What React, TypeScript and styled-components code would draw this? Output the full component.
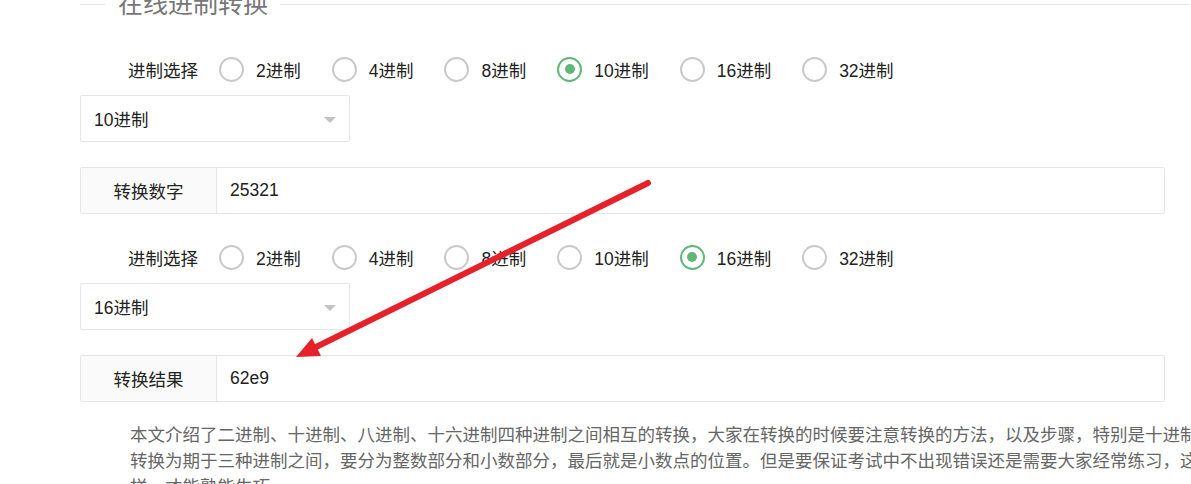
import React from "react";
import styled, { createGlobalStyle } from "styled-components";

const GlobalStyle = createGlobalStyle`
  html, body {
    margin: 0;
    padding: 0;
    background: #fff;
    overflow: hidden;
  }
  body {
    font-family: "Liberation Sans", "Noto Sans CJK SC", sans-serif;
    font-size: 17.5px;
    color: #333;
  }
`;

const bases = ["2", "4", "8", "10", "16", "32"];

// Page frame
const Page = styled.div`
  position: relative;
  width: 1191px;
  height: 484px;
  overflow: hidden;
`;

const Field = styled.section`
  margin-left: 80px;
  width: 1110px;
`;

const FieldHeader = styled.div`
  display: flex;
  align-items: center;
  height: 30px;
  margin-top: -11px;
`;

const Rule = styled.div<{ grow?: boolean }>`
  flex: ${(p) => (p.grow ? "1" : "0 0 25px")};
  height: 1px;
  background: #e6e6e6;
`;

const FieldTitle = styled.h2`
  margin: 0;
  padding: 0 12px 0 13px;
  font-size: 25px;
  font-weight: 400;
  line-height: 30px;
  color: #777;
`;

const FieldBody = styled.div`
  padding-right: 25px;
  margin-top: 31px;
`;

// Form parts
const Block = styled.div<{ gap?: number }>`
  margin-top: ${(p) => p.gap || 0}px;
`;

const RadioRow = styled.div`
  display: flex;
  align-items: center;
  height: 38px;
  padding-left: 48px;
`;

const RowLabel = styled.span`
  margin-right: 21px;
  color: #222;
`;

const RadioItem = styled.label`
  display: flex;
  align-items: center;
  margin-right: 31px;
  color: #222;
`;

const RadioMark = styled.span<{ checked?: boolean }>`
  width: 25px;
  height: 25px;
  box-sizing: border-box;
  border-radius: 50%;
  border: 2px solid ${(p) => (p.checked ? "#5FB878" : "#c9c9c9")};
  margin-right: 12px;
  display: flex;
  align-items: center;
  justify-content: center;

  &::after {
    content: "";
    display: ${(p) => (p.checked ? "block" : "none")};
    width: 10px;
    height: 10px;
    border-radius: 50%;
    background: #5FB878;
  }
`;

const SelectBox = styled.div`
  position: relative;
  width: 270px;
  height: 47px;
  box-sizing: border-box;
  margin-top: 7px;
  padding-left: 13px;
  border: 1px solid #e6e6e6;
  border-radius: 2px;
  display: flex;
  align-items: center;
  color: #222;

  &::after {
    content: "";
    position: absolute;
    right: 13px;
    top: 50%;
    margin-top: -2px;
    border-style: solid;
    border-width: 6.5px;
    border-color: #c2c2c2 transparent transparent transparent;
  }
`;

const InputGroup = styled.div`
  display: flex;
  height: 47px;
  box-sizing: border-box;
  margin-top: 25px;
  border: 1px solid #e6e6e6;
  border-radius: 2px;
`;

const Prefix = styled.div`
  width: 135px;
  flex: none;
  background: #fafafa;
  border-right: 1px solid #e6e6e6;
  display: flex;
  align-items: center;
  justify-content: center;
  color: #222;
`;

const ValueInput = styled.input`
  flex: 1;
  border: none;
  outline: none;
  padding: 0 0 0 13px;
  font: inherit;
  color: #222;
  background: transparent;
`;

const Intro = styled.p`
  margin: 20px 0 0 50px;
  width: 1075px;
  font-size: 17.5px;
  line-height: 26px;
  color: #666;
`;

const ArrowLayer = styled.svg`
  position: absolute;
  left: 0;
  top: 0;
  pointer-events: none;
`;

interface BlockProps {
  selected: string;
  label: string;
  value: string;
  gap?: number;
}

const ConvertBlock: React.FC<BlockProps> = ({ selected, label, value, gap }) => (
  <Block gap={gap}>
    <RadioRow>
      <RowLabel>进制选择</RowLabel>
      {bases.map((b) => (
        <RadioItem key={b}>
          <RadioMark checked={b === selected} />
          {b}进制
        </RadioItem>
      ))}
    </RadioRow>
    <SelectBox>{selected}进制</SelectBox>
    <InputGroup>
      <Prefix>{label}</Prefix>
      <ValueInput defaultValue={value} readOnly />
    </InputGroup>
  </Block>
);

const App: React.FC = () => {
  return (
    <Page>
      <GlobalStyle />
      <Field>
        <FieldHeader>
          <Rule />
          <FieldTitle>在线进制转换</FieldTitle>
          <Rule grow />
        </FieldHeader>
        <FieldBody>
          <ConvertBlock selected="10" label="转换数字" value="25321" />
          <ConvertBlock selected="16" label="转换结果" value="62e9" gap={24} />
          <Intro>
            本文介绍了二进制、十进制、八进制、十六进制四种进制之间相互的转换，大家在转换的时候要注意转换的方法，以及步骤，特别是十进制转换为期于三种进制之间，要分为整数部分和小数部分，最后就是小数点的位置。但是要保证考试中不出现错误还是需要大家经常练习，这样，才能熟能生巧。
          </Intro>
        </FieldBody>
      </Field>

      {/* red annotation arrow */}
      <ArrowLayer width={1191} height={484}>
        <line
          x1={648}
          y1={183}
          x2={312}
          y2={349}
          stroke="#e6212a"
          strokeWidth={6}
          strokeLinecap="round"
        />
        <polygon points="296,357 312,338 321,356" fill="#e6212a" />
      </ArrowLayer>
    </Page>
  );
};

export default App;
